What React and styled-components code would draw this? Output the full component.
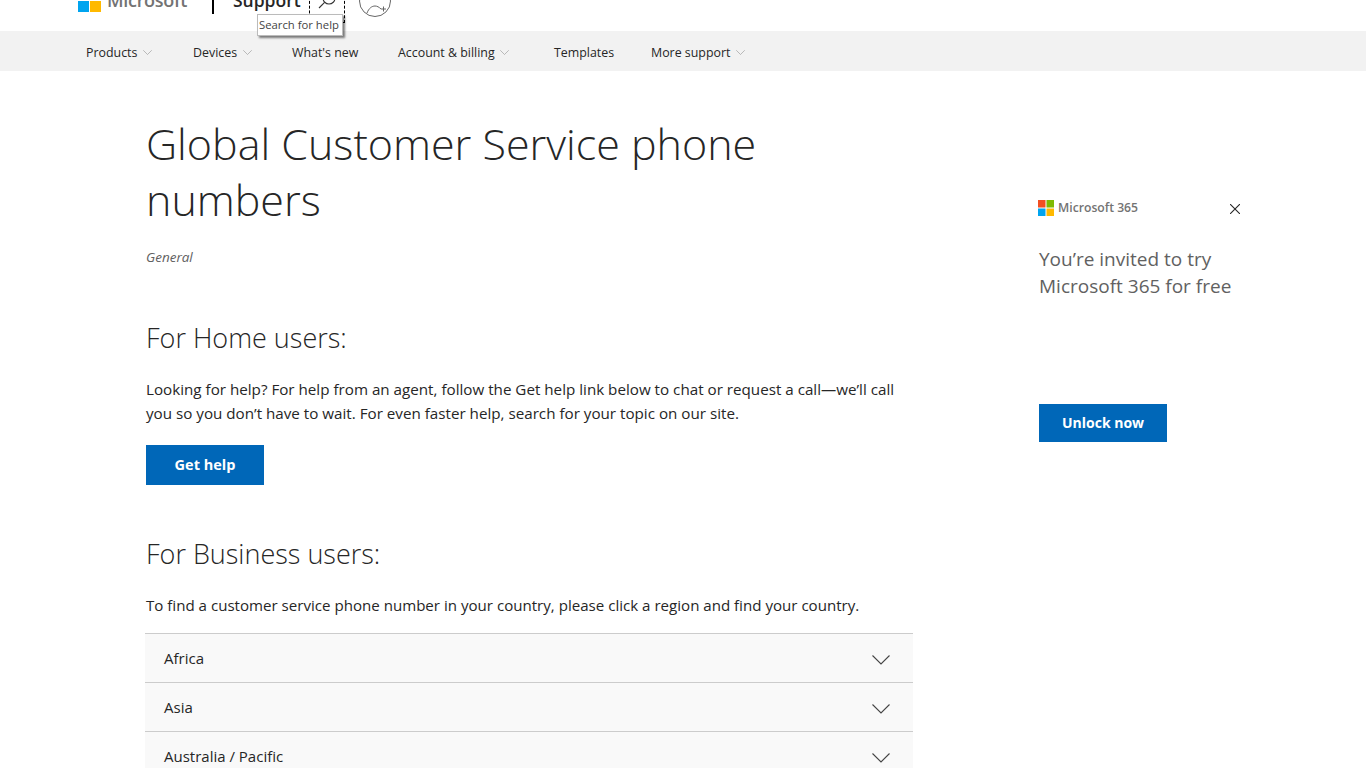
import { createGlobalStyle, styled } from 'styled-components';

const GlobalStyle = createGlobalStyle`
  html, body {
    margin: 0;
    height: 768px;
    overflow: hidden;
    background: #fff;
    font-family: 'Open Sans', 'Liberation Sans', sans-serif;
    color: #262626;
  }
`;

const Header = styled.header`
  height: 31px;
  position: relative;
`;

const HeaderClip = styled.div`
  height: 31px;
  overflow: hidden;
`;

const HeaderBar = styled.div`
  display: flex;
  align-items: center;
  height: 54px;
  margin-top: -27px;
  padding-left: 78px;
`;

const LogoGrid = styled.svg`
  display: block;
  flex: none;
`;

const Wordmark = styled.span`
  margin-left: 6px;
  font-size: 18px;
  font-weight: 600;
  color: #737373;
  letter-spacing: -0.3px;
`;

const Divider = styled.span`
  width: 2px;
  height: 28px;
  margin: 0 19px 0 25px;
  background: #000;
`;

const SupportLink = styled.span`
  font-size: 17.5px;
  font-weight: 600;
  color: #262626;
`;

const SearchBox = styled.span`
  box-sizing: border-box;
  display: flex;
  align-items: center;
  justify-content: center;
  width: 36px;
  height: 46px;
  margin-left: 8px;
  border: 1px dashed #000;
`;

const Avatar = styled.svg`
  display: block;
  margin: 2px 0 0 14px;
`;

const Tooltip = styled.div`
  position: absolute;
  left: 257px;
  top: 14px;
  z-index: 2;
  padding: 2px 3px 2px 1px;
  font-size: 11.3px;
  line-height: 16px;
  white-space: nowrap;
  color: #444;
  background: #fff;
  border: 1px solid #bbb;
  box-shadow: 2px 2px 2px rgba(0, 0, 0, 0.5);
`;

const Nav = styled.nav`
  box-sizing: border-box;
  display: flex;
  align-items: center;
  height: 40px;
  padding: 2px 0 0 86px;
  background: #f2f2f2;
`;

const NavItem = styled.span`
  display: flex;
  align-items: center;
  gap: 5.5px;
  flex: none;
  width: ${(props) => props.$width}px;
  font-size: 12.4px;
  color: #262626;
`;

const Page = styled.div`
  display: flex;
  align-items: flex-start;
  padding-left: 145px;
`;

const Main = styled.main`
  width: 768px;
  flex: none;
`;

const Title = styled.h1`
  margin: 45px 0 0 1px;
  font-size: 43px;
  font-weight: 300;
  line-height: 56px;
  color: #262626;
`;

const Category = styled.div`
  margin: 20px 0 0 1px;
  font-size: 13.5px;
  line-height: 18px;
  font-style: italic;
  color: #616161;
`;

const SectionTitle = styled.h2`
  margin: ${(props) => props.$top}px 0 0 1px;
  font-size: 27px;
  font-weight: 300;
  line-height: 36px;
  color: #262626;
`;

const Paragraph = styled.p`
  margin: ${(props) => props.$top}px 0 0 1px;
  font-size: ${(props) => props.$size}px;
  line-height: 24px;
  color: #262626;
`;

const PrimaryButton = styled.button`
  display: block;
  width: ${(props) => props.$width}px;
  height: ${(props) => props.$height}px;
  padding: 0 0 2px;
  border: 0;
  background: #0067b8;
  color: #fff;
  font-family: inherit;
  font-size: 14.5px;
  font-weight: 700;
`;

const GetHelp = styled(PrimaryButton)`
  margin: 20px 0 0 1px;
`;

const Accordion = styled.div`
  margin-top: 16px;
`;

const AccordionRow = styled.div`
  box-sizing: border-box;
  display: flex;
  align-items: center;
  justify-content: space-between;
  height: 49px;
  padding: 0 23px 0 19px;
  background: #f9f9f9;
  border-top: 1px solid #ccc;
  font-size: 15px;
  color: #262626;

  svg {
    margin-top: 4px;
  }
`;

const Aside = styled.aside`
  width: 201px;
  margin: 129px 0 0 126px;
  flex: none;
`;

const AdTop = styled.div`
  display: flex;
  align-items: center;
  justify-content: space-between;
  height: 16px;

  > svg {
    margin-top: 2px;
  }
`;

const AdBrand = styled.div`
  display: flex;
  align-items: center;
  gap: 4px;
  margin-left: -1px;
  font-size: 12.2px;
  font-weight: 600;
  color: #737373;
`;

const AdBrandName = styled.span`
  margin-bottom: 2px;
`;

const AdTitle = styled.div`
  margin-top: 30px;
  font-size: 19px;
  line-height: 27px;
  font-weight: 400;
  color: #616161;
`;

const UnlockButton = styled(PrimaryButton)`
  margin-top: 104px;
  font-size: 14px;
`;

const navItems = [
  { label: 'Products', menu: true, width: 107 },
  { label: 'Devices', menu: true, width: 99 },
  { label: "What's new", width: 106 },
  { label: 'Account & billing', menu: true, width: 156 },
  { label: 'Templates', width: 97 },
  { label: 'More support', menu: true, width: 110 },
];

const regions = ['Africa', 'Asia', 'Australia / Pacific'];

function MsLogo({ size, gap }) {
  const cell = (size - gap) / 2;
  const far = cell + gap;
  return (
    <LogoGrid width={size} height={size} viewBox={`0 0 ${size} ${size}`}>
      <rect width={cell} height={cell} fill="#f25022" />
      <rect x={far} width={cell} height={cell} fill="#7fba00" />
      <rect y={far} width={cell} height={cell} fill="#00a4ef" />
      <rect x={far} y={far} width={cell} height={cell} fill="#ffb900" />
    </LogoGrid>
  );
}

function Chevron({ width, height, color }) {
  return (
    <svg width={width} height={height} viewBox="0 0 18 10" fill="none">
      <path d="M0.5 0.5 L9 9 L17.5 0.5" stroke={color} strokeWidth="1.1" />
    </svg>
  );
}

function App() {
  return (
    <>
      <GlobalStyle />
      <Header>
        <HeaderClip>
          <HeaderBar>
            <MsLogo size={23} gap={1} />
            <Wordmark>Microsoft</Wordmark>
            <Divider />
            <SupportLink>Support</SupportLink>
            <SearchBox>
              <svg width="18" height="18" viewBox="0 0 18 18" fill="none" stroke="#333" strokeWidth="1.1">
                <circle cx="11" cy="7" r="6" />
                <path d="M6.6 11.4 L1 17" />
              </svg>
            </SearchBox>
            <Avatar width="32" height="32" viewBox="0 0 32 32" fill="none" stroke="#666" strokeWidth="1">
              <circle cx="16" cy="16" r="15.5" />
              <circle cx="16" cy="8" r="6" />
              <path d="M8 28 C10 23 13 21 16 21 C18 21 20 22 22 24" />
              <path d="M24.5 21.5 V26.5 M22 24 H27" />
            </Avatar>
          </HeaderBar>
        </HeaderClip>
        <Tooltip>Search for help</Tooltip>
      </Header>
      <Nav>
        {navItems.map((item) => (
          <NavItem key={item.label} $width={item.width}>
            {item.label}
            {item.menu && <Chevron width={9} height={5} color="#8a8a8a" />}
          </NavItem>
        ))}
      </Nav>
      <Page>
        <Main>
          <Title>Global Customer Service phone numbers</Title>
          <Category>General</Category>
          <SectionTitle $top={54}>For Home users:</SectionTitle>
          <Paragraph $top={21} $size={15.2}>
            Looking for help? For help from an agent, follow the Get help link below to chat or request a call—we’ll call
            you so you don’t have to wait. For even faster help, search for your topic on our site.
          </Paragraph>
          <GetHelp $width={118} $height={40}>Get help</GetHelp>
          <SectionTitle $top={51}>For Business users:</SectionTitle>
          <Paragraph $top={21} $size={15.1}>
            To find a customer service phone number in your country, please click a region and find your country.
          </Paragraph>
          <Accordion>
            {regions.map((region) => (
              <AccordionRow key={region}>
                {region}
                <Chevron width={18} height={10} color="#444" />
              </AccordionRow>
            ))}
          </Accordion>
        </Main>
        <Aside>
          <AdTop>
            <AdBrand>
              <MsLogo size={16} gap={1} />
              <AdBrandName>Microsoft 365</AdBrandName>
            </AdBrand>
            <svg width="10" height="10" viewBox="0 0 10 10" stroke="#262626" strokeWidth="1.1">
              <path d="M0 0 L10 10 M10 0 L0 10" />
            </svg>
          </AdTop>
          <AdTitle>
            You’re invited to try
            <br />
            Microsoft 365 for free
          </AdTitle>
          <UnlockButton $width={128} $height={38}>Unlock now</UnlockButton>
        </Aside>
      </Page>
    </>
  );
}

export default App;
